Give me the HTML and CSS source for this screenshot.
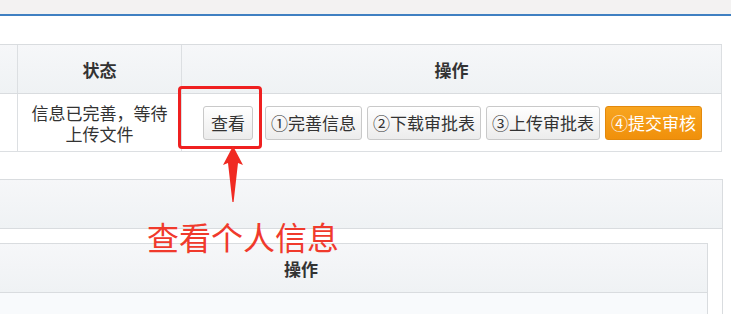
FILE: index.html
```html
<!DOCTYPE html>
<html lang="zh-CN">
<head>
  <meta charset="UTF-8">
  <meta name="viewport" content="width=device-width, initial-scale=1.0">
  <title>个人信息</title>
  <link rel="stylesheet" href="styles.css">
</head>
<body>
  <div class="page">
    <!-- top strip -->
    <div class="topbar"></div>

    <!-- applicant status table -->
    <div class="grid status-grid">
      <div class="row head-row">
        <div class="cell col-a"></div>
        <div class="cell col-b">状态</div>
        <div class="cell col-c">操作</div>
      </div>
      <div class="row body-row">
        <div class="cell col-a"></div>
        <div class="cell col-b">信息已完善，等待<br>上传文件</div>
        <div class="cell col-c actions">
          <button class="btn btn-view">查看</button>
          <button class="btn">①完善信息</button>
          <button class="btn">②下载审批表</button>
          <button class="btn">③上传审批表</button>
          <button class="btn btn-submit">④提交审核</button>
        </div>
      </div>
    </div>

    <!-- lower panel -->
    <div class="panel">
      <div class="panel-head"></div>
      <div class="panel-body">
        <div class="grid inner-grid">
          <div class="row head-row">
            <div class="cell col-wide">操作</div>
          </div>
          <div class="row empty-row"></div>
        </div>
      </div>
    </div>

    <!-- annotation -->
    <div class="mark-box"></div>
    <svg class="mark-arrow" width="24" height="58" viewBox="0 0 24 58">
      <path d="M11 0 L21 19 L16 17 L11.6 56 L10.4 56 L6 17 L1 19 Z" fill="#f02a22"/>
    </svg>
    <div class="mark-text">查看个人信息</div>
  </div>
</body>
</html>
```

FILE: styles.css
```css
* {
  margin: 0;
  padding: 0;
  box-sizing: border-box;
}

body {
  background-color: #ffffff;
  height: 314px;
  overflow: hidden;
  font-family: "Microsoft YaHei", "Noto Sans CJK SC", sans-serif;
  font-size: 17px;
  color: #333333;
}

.page {
  position: relative;
  width: 731px;
  height: 314px;
  overflow: hidden;
}

.topbar {
  height: 16px;
  background-color: #f3f2f2;
  border-bottom: 2px solid #3f80c2;
}

.grid {
  display: flex;
  flex-direction: column;
}

.row {
  display: flex;
}

.cell {
  display: flex;
  align-items: center;
  justify-content: center;
  text-align: center;
  border-right: 1px solid #dcdfe2;
}

.head-row {
  height: 50px;
  background: linear-gradient(#f6f7f9, #eff2f4);
  border-top: 1px solid #d9dcdf;
  border-bottom: 1px solid #d9dcdf;
  font-weight: bold;
}

/* first table */
.status-grid {
  margin-top: 28px;
  width: 722px;
}

.col-a {
  width: 18px;
}

.col-b {
  width: 164px;
}

.col-c {
  flex: 1;
}

.body-row {
  height: 58px;
  border-bottom: 1px solid #dcdfe2;
  line-height: 21px;
}

.actions {
  gap: 5px;
  padding-left: 2px;
}

.btn {
  height: 34px;
  padding: 0 5px;
  font-family: inherit;
  font-size: 17px;
  color: #333333;
  background: linear-gradient(#ffffff, #ececec);
  border: 1px solid #c9c9c9;
  border-radius: 3px;
}

.btn-view {
  padding: 0 7px;
  margin-right: 7px;
}

.btn-submit {
  color: #ffffff;
  background: linear-gradient(#f8a51f, #f0900b);
  border-color: #e3890c;
}

/* lower panel */
.panel {
  margin-top: 27px;
  margin-left: -20px;
  width: 743px;
  height: 200px;
  border: 1px solid #d9dcdf;
}

.panel-head {
  height: 49px;
  background: linear-gradient(#f6f7f9, #eff2f4);
  border-bottom: 1px solid #d9dcdf;
}

.panel-body {
  padding: 14px 14px 0 0;
}

.inner-grid {
  margin-left: -86px;
  border-right: 1px solid #d9dcdf;
}

.col-wide {
  flex: 1;
  border-right: none;
}

.empty-row {
  height: 80px;
  background-color: #f8fafc;
}

/* red annotation */
.mark-box {
  position: absolute;
  left: 178px;
  top: 86px;
  width: 84px;
  height: 63px;
  border: 3px solid #ef2020;
  border-radius: 4px;
}

.mark-arrow {
  position: absolute;
  left: 222px;
  top: 146px;
}

.mark-text {
  position: absolute;
  left: 147px;
  top: 218px;
  font-size: 32px;
  line-height: 36px;
  color: #f03a2c;
  white-space: nowrap;
}
```
